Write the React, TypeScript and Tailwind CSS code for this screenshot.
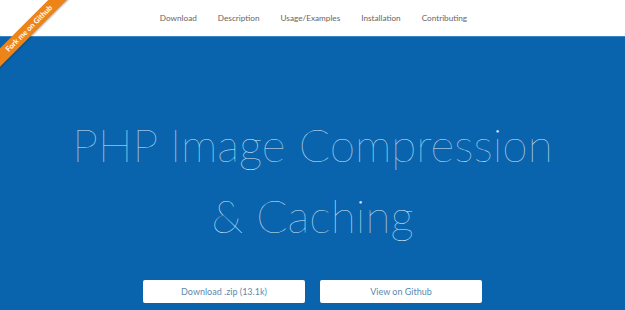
import React from 'react';

const links = ['Download', 'Description', 'Usage/Examples', 'Installation', 'Contributing'];

const App: React.FC = () => {
  return (
    <div className="relative h-[310px] w-[625px] overflow-hidden bg-[#0a64ad] font-['Lato','Liberation_Sans',sans-serif]">
      {/* Fork ribbon */}
      <div className="absolute left-[-46px] top-[22px] z-10 w-[150px] -rotate-45 bg-[#ee8318] py-[1.5px] text-center text-[7.5px] font-bold leading-[10px] text-white shadow-[0_1px_2px_rgba(0,0,0,0.3)]">
        Fork me on Github
      </div>

      {/* Nav */}
      <nav className="flex h-[37px] items-center justify-center gap-[21px] border-b border-[#3a86c4] bg-white pl-[2px] text-[8.2px] text-[#666]">
        {links.map((l) => (
          <a key={l} href="#">
            {l}
          </a>
        ))}
      </nav>

      {/* Hero */}
      <div className="flex flex-col items-center pt-[72px]">
        <h1 className="text-center text-[46px] font-thin leading-[71px] text-[#d6e6f4]">
          PHP Image Compression
          <br />& Caching
        </h1>
        <div className="mt-[29px] flex gap-[15px]">
          <button className="h-[23px] w-[162px] rounded-[2px] bg-white text-[9px] text-[#5a8ab0]">
            Download .zip (13.1k)
          </button>
          <button className="h-[23px] w-[162px] rounded-[2px] bg-white text-[9px] text-[#5a8ab0]">
            View on Github
          </button>
        </div>
      </div>
    </div>
  );
};

export default App;
